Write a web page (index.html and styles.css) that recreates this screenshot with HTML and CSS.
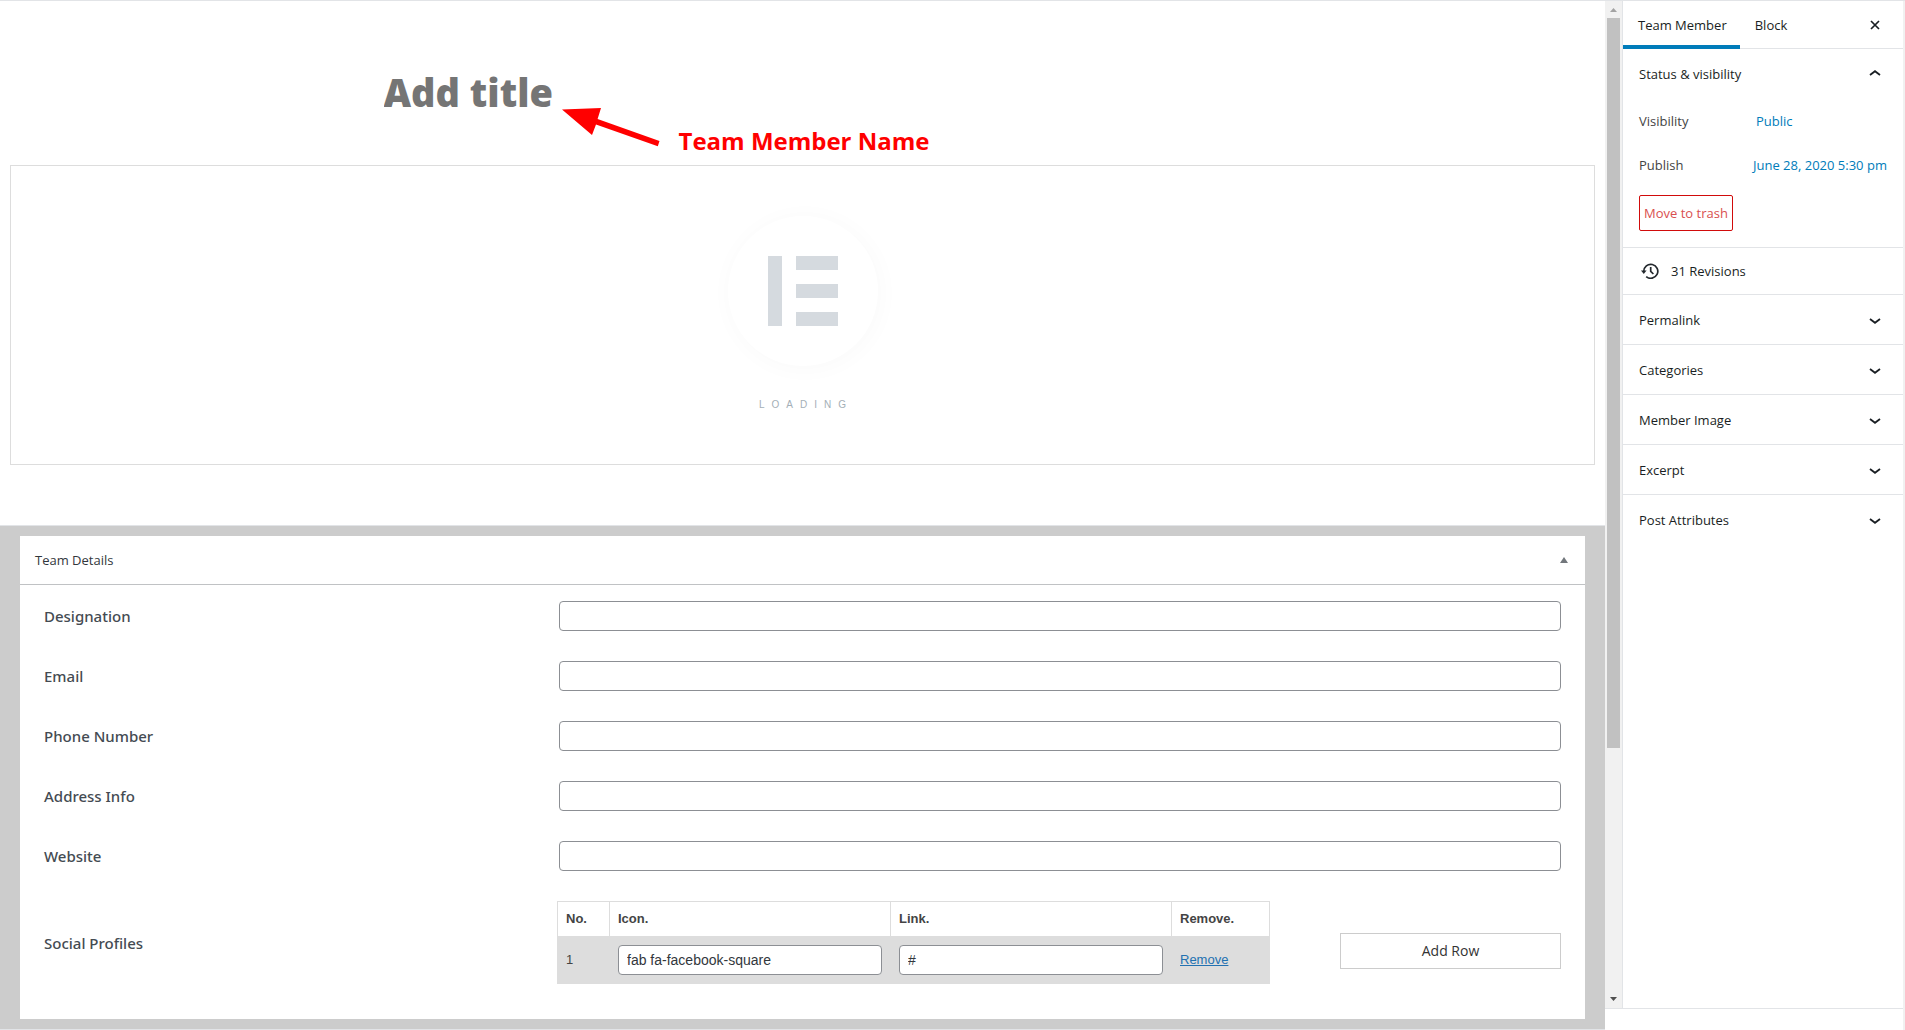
FILE: index.html
```html
<!DOCTYPE html>
<html lang="en">

<head>
    <meta charset="UTF-8">
    <meta name="viewport" content="width=device-width, initial-scale=1.0">
    <title>Edit Team Member</title>
    <link rel="stylesheet" href="styles.css">
</head>

<body>
    <main class="editor">
        <div class="title-block">
            <input type="text" class="post-title" placeholder="Add title" aria-label="Add title">
            <div class="annotation">
                <svg width="100" height="42" viewBox="0 0 100 42">
                    <path d="M0 4.5 L39 3 L35.6 14 L97.5 36 L95.8 41.2 L34 19.5 L30 30 Z" fill="#f00" />
                </svg>
                <span>Team Member Name</span>
            </div>
        </div>

        <div class="loading-box">
            <div class="loader">
                <svg width="70" height="70" viewBox="0 0 70 70" fill="#d5dadf">
                    <rect x="0" y="0" width="14" height="70" />
                    <rect x="28" y="0" width="42" height="14" />
                    <rect x="28" y="28" width="42" height="14" />
                    <rect x="28" y="56" width="42" height="14" />
                </svg>
            </div>
            <div class="loading-text">LOADING</div>
        </div>

        <div class="metaboxes">
            <section class="panel">
                <div class="panel-header">
                    <h2>Team Details</h2>
                    <button type="button" class="toggle" aria-label="Toggle panel">
                        <svg width="8" height="6" viewBox="0 0 8 6"><path d="M4 0 L8 6 H0 Z" fill="#72777c" /></svg>
                    </button>
                </div>
                <form class="panel-body">
                    <div class="field">
                        <label for="designation">Designation</label>
                        <input type="text" id="designation">
                    </div>
                    <div class="field">
                        <label for="email">Email</label>
                        <input type="text" id="email">
                    </div>
                    <div class="field">
                        <label for="phone">Phone Number</label>
                        <input type="text" id="phone">
                    </div>
                    <div class="field">
                        <label for="address">Address Info</label>
                        <input type="text" id="address">
                    </div>
                    <div class="field">
                        <label for="website">Website</label>
                        <input type="text" id="website">
                    </div>
                    <div class="social">
                        <span class="social-label">Social Profiles</span>
                        <table>
                            <thead>
                                <tr>
                                    <th class="col-no">No.</th>
                                    <th class="col-field">Icon.</th>
                                    <th class="col-field">Link.</th>
                                    <th>Remove.</th>
                                </tr>
                            </thead>
                            <tbody>
                                <tr>
                                    <td>1</td>
                                    <td><input type="text" value="fab fa-facebook-square" aria-label="Icon"></td>
                                    <td><input type="text" value="#" aria-label="Link"></td>
                                    <td><a href="#">Remove</a></td>
                                </tr>
                            </tbody>
                        </table>
                        <button type="button" class="add-row">Add Row</button>
                    </div>
                </form>
            </section>
        </div>
    </main>

    <div class="side">
        <div class="side-main">
            <div class="scrollbar">
                <svg width="7" height="4" viewBox="0 0 7 4"><path d="M3.5 0 L7 4 H0 Z" fill="#a3a3a3" /></svg>
                <div class="track">
                    <div class="thumb"></div>
                </div>
                <svg width="7" height="4" viewBox="0 0 7 4"><path d="M0 0 H7 L3.5 4 Z" fill="#505050" /></svg>
            </div>

            <aside class="sidebar">
                <div class="tabs">
                    <button type="button" class="tab active">Team Member</button>
                    <button type="button" class="tab">Block</button>
                    <button type="button" class="close" aria-label="Close settings">
                        <svg width="10" height="10" viewBox="0 0 10 10"><path d="M1 1 L9 9 M9 1 L1 9" stroke="#191e23" stroke-width="1.7" /></svg>
                    </button>
                </div>

                <div class="status">
                    <button type="button" class="row">Status &amp; visibility
                        <svg width="12" height="8" viewBox="0 0 12 8"><path d="M1 5 L6 1.2 L11 5" /></svg>
                    </button>
                    <div class="setting">
                        <span>Visibility</span>
                        <a href="#" class="public">Public</a>
                    </div>
                    <div class="setting">
                        <span>Publish</span>
                        <a href="#">June 28, 2020 5:30 pm</a>
                    </div>
                    <button type="button" class="trash">Move to trash</button>
                </div>

                <button type="button" class="revisions">
                    <svg width="18" height="16" viewBox="0 0 18 16" fill="none" stroke="#23282d" stroke-width="1.7">
                        <path d="M2.8 8.5 A7 7 0 1 1 5.2 13.6" />
                        <path d="M9.7 4 V8.4 L12.4 11" />
                        <path d="M0 7.6 H5.6 L2.8 11 Z" fill="#23282d" stroke="none" />
                    </svg>
                    31 Revisions
                </button>

                <button type="button" class="row">Permalink
                    <svg width="12" height="8" viewBox="0 0 12 8"><path d="M1 3 L6 6.8 L11 3" /></svg>
                </button>
                <button type="button" class="row">Categories
                    <svg width="12" height="8" viewBox="0 0 12 8"><path d="M1 3 L6 6.8 L11 3" /></svg>
                </button>
                <button type="button" class="row">Member Image
                    <svg width="12" height="8" viewBox="0 0 12 8"><path d="M1 3 L6 6.8 L11 3" /></svg>
                </button>
                <button type="button" class="row">Excerpt
                    <svg width="12" height="8" viewBox="0 0 12 8"><path d="M1 3 L6 6.8 L11 3" /></svg>
                </button>
                <button type="button" class="row">Post Attributes
                    <svg width="12" height="8" viewBox="0 0 12 8"><path d="M1 3 L6 6.8 L11 3" /></svg>
                </button>
            </aside>
        </div>
        <div class="side-footer"></div>
    </div>
</body>

</html>
```

FILE: styles.css
```css
* {
    box-sizing: border-box;
}

body {
    display: flex;
    min-height: 100vh;
    margin: 0;
    border-top: 1px solid #e2e4e7;
    background-color: #fff;
    color: #444;
    font-family: "Open Sans", sans-serif;
    font-size: 13px;
}

button {
    padding: 0;
    border: none;
    background: none;
    color: #191e23;
    font: inherit;
    cursor: pointer;
}

a {
    color: #007cba;
    text-decoration: none;
}

/* Editor */
.editor {
    flex: 1;
    min-width: 0;
    display: flex;
    flex-direction: column;
}

.title-block {
    position: relative;
    width: 100%;
    max-width: 840px;
    margin: 0 auto;
    padding-top: 63px;
    height: 164px;
}

.post-title {
    width: 100%;
    height: 56px;
    padding: 0 1px;
    border: none;
    background: none;
    outline: none;
    font-family: "Open Sans", sans-serif;
    font-size: 38px;
    font-weight: 800;
}

.post-title::placeholder {
    color: #757575;
    opacity: 1;
}

.annotation {
    position: absolute;
    left: 179px;
    top: 104px;
    display: flex;
    gap: 17px;
    color: #f00;
    font-size: 24px;
    font-weight: 700;
    line-height: 32px;
}

.annotation span {
    padding-top: 20px;
}

.loading-box {
    display: flex;
    flex-direction: column;
    align-items: center;
    height: 300px;
    margin: 0 10px;
    padding-top: 50px;
    border: 1px solid #ddd;
}

.loader {
    display: flex;
    align-items: center;
    justify-content: center;
    width: 150px;
    height: 150px;
    border-radius: 50%;
    box-shadow: 2px 2px 20px 4px rgba(0, 0, 0, 0.02);
}

.loading-text {
    margin-top: 31px;
    padding-left: 7px;
    color: #a4afb7;
    font-family: "Liberation Sans", sans-serif;
    font-size: 10px;
    line-height: 16px;
    letter-spacing: 7px;
}

/* Metabox */
.metaboxes {
    flex: 1;
    margin-top: 60px;
    padding: 10px 20px;
    border-top: 1px solid #e2e4e7;
    border-bottom: 1px solid #e2e4e7;
    background-color: #ccc;
}

.panel {
    height: 100%;
    background-color: #fff;
}

.panel-header {
    display: flex;
    align-items: center;
    justify-content: space-between;
    height: 49px;
    padding: 0 17px 0 15px;
    border-bottom: 1px solid #c0c2c4;
}

.panel-header h2 {
    margin: 0;
    color: #32373c;
    font-size: 13px;
    font-weight: 500;
}

.toggle {
    display: flex;
}

.panel-body {
    padding: 16px 24px 34px;
}

.field {
    display: grid;
    grid-template-columns: 515px 1fr;
    align-items: center;
    margin-bottom: 30px;
}

.field label,
.social-label {
    color: #444b52;
    font-family: "Noto Sans", sans-serif;
    font-size: 15px;
    font-weight: 500;
}

.field input,
td input {
    width: 100%;
    height: 30px;
    padding: 0 8px;
    border: 1px solid #8c8f94;
    border-radius: 4px;
    background-color: #fff;
    color: #32373c;
    font-family: "Liberation Sans", sans-serif;
    font-size: 14px;
}

.social {
    display: grid;
    grid-template-columns: 513px 713px 1fr;
    align-items: center;
}

.add-row {
    height: 36px;
    margin: 16px 0 0 70px;
    border: 1px solid #ccc;
    color: #333;
    font-size: 14px;
}

table {
    width: 100%;
    border-collapse: collapse;
    table-layout: fixed;
    font-family: "Liberation Sans", sans-serif;
    font-size: 13px;
}

th,
td {
    padding: 8px;
    border: 1px solid #ddd;
    text-align: left;
    line-height: 18px;
}

tbody tr {
    background-color: #ddd;
}

.col-no {
    width: 52px;
}

.col-field {
    width: 281px;
}

td a {
    color: #2271b1;
    text-decoration: underline;
}

/* Right side */
.side {
    display: flex;
    flex-direction: column;
    width: 300px;
    border-right: 2px solid #f1f1f1;
}

.side-main {
    flex: 1;
    display: flex;
}

.side-footer {
    height: 22px;
    border-top: 1px solid #e2e4e7;
}

.scrollbar {
    display: flex;
    flex-direction: column;
    align-items: center;
    width: 17px;
    padding: 7px 0;
    background-color: #f1f1f1;
}

.track {
    flex: 1;
    width: 13px;
    margin: 6px 0;
}

.thumb {
    height: 75%;
    background-color: #c1c1c1;
}

.sidebar {
    flex: 1;
    border-left: 1px solid #e2e4e7;
}

.tabs {
    display: flex;
    height: 48px;
    padding-right: 23px;
    border-bottom: 1px solid #e2e4e7;
}

.tab {
    height: 48px;
    padding: 0 13px 0 15px;
    border-bottom: 4px solid transparent;
    border-top: 4px solid transparent;
}

.tab.active {
    border-bottom-color: #007cba;
}

.close {
    display: flex;
    align-items: center;
    margin-left: auto;
}

.row {
    display: flex;
    align-items: center;
    justify-content: space-between;
    width: 100%;
    height: 50px;
    padding: 0 22px 0 16px;
    border-top: 1px solid #e2e4e7;
    font-weight: 500;
}

.row svg {
    fill: none;
    stroke: #191e23;
    stroke-width: 1.8;
}

.status {
    height: 198px;
}

.status .row {
    border-top: none;
}

.setting {
    display: flex;
    align-items: center;
    height: 44px;
    padding-left: 16px;
}

.setting span {
    width: 114px;
}

.public {
    padding-left: 3px;
}

.trash {
    height: 36px;
    margin: 8px 16px 0;
    padding: 0 4px;
    border: 1px solid #d10b0b;
    border-radius: 2px;
    color: #d94f4f;
}

.revisions {
    display: flex;
    align-items: center;
    gap: 12px;
    width: 100%;
    height: 47px;
    padding: 0 18px;
    border-top: 1px solid #e2e4e7;
    font-weight: 500;
}
```
